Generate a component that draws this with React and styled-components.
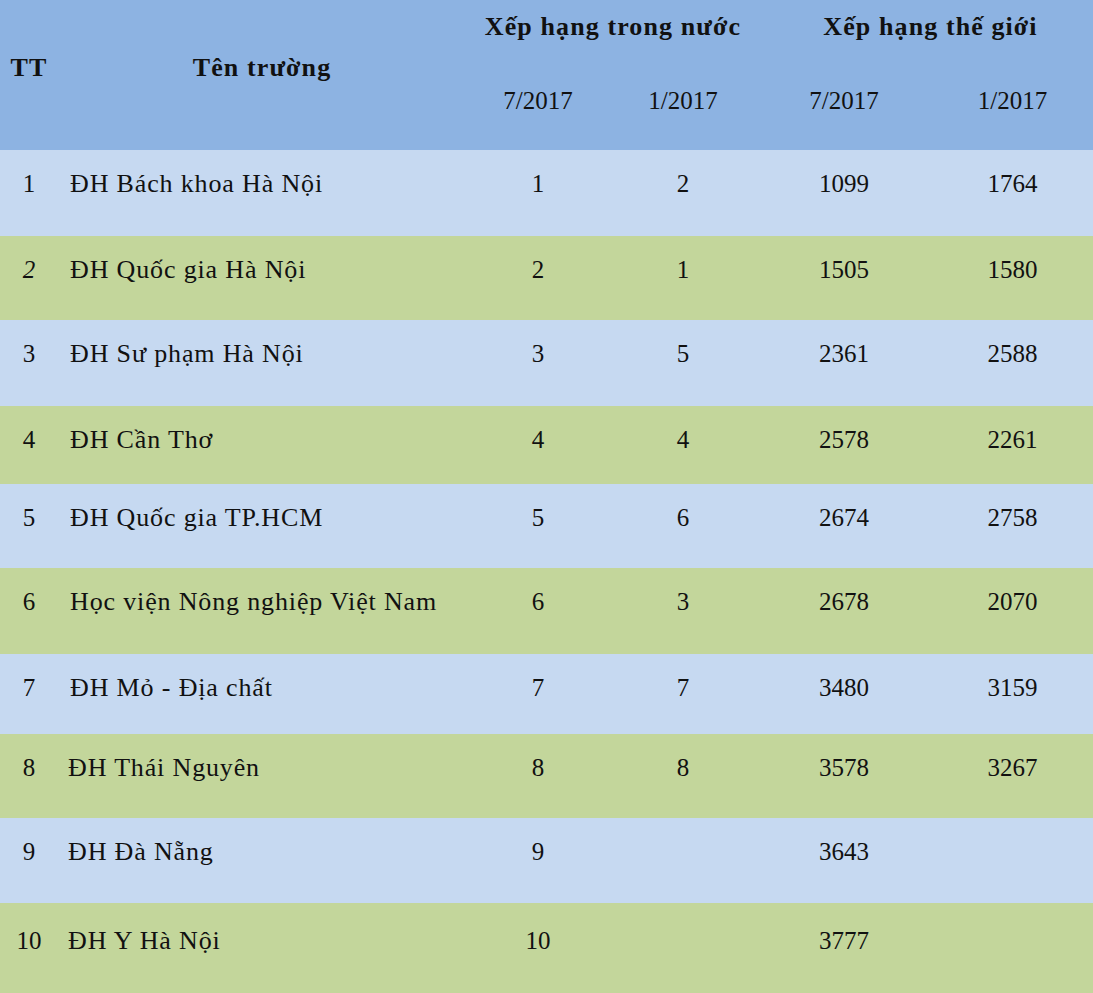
import React from "react";
import styled, { createGlobalStyle } from "styled-components";

const GlobalStyle = createGlobalStyle`
  html, body {
    margin: 0;
    padding: 0;
    background: #c3d69b;
  }
`;

const COLS = "58px 408px 144px 146px 176px 161px";

const rows = [
  { tt: "1", name: "ĐH Bách khoa Hà Nội", a: "1", b: "2", c: "1099", d: "1764", h: 86 },
  { tt: "2", name: "ĐH Quốc gia Hà Nội", a: "2", b: "1", c: "1505", d: "1580", h: 84, italic: true },
  { tt: "3", name: "ĐH Sư phạm Hà Nội", a: "3", b: "5", c: "2361", d: "2588", h: 86 },
  { tt: "4", name: "ĐH Cần Thơ", a: "4", b: "4", c: "2578", d: "2261", h: 78 },
  { tt: "5", name: "ĐH Quốc gia TP.HCM", a: "5", b: "6", c: "2674", d: "2758", h: 84 },
  { tt: "6", name: "Học viện Nông nghiệp Việt Nam", a: "6", b: "3", c: "2678", d: "2070", h: 86 },
  { tt: "7", name: "ĐH Mỏ - Địa chất", a: "7", b: "7", c: "3480", d: "3159", h: 80 },
  { tt: "8", name: "ĐH Thái Nguyên", a: "8", b: "8", c: "3578", d: "3267", h: 84, shift: -2 },
  { tt: "9", name: "ĐH Đà Nẵng", a: "9", b: "", c: "3643", d: "", h: 85, shift: -2 },
  { tt: "10", name: "ĐH Y Hà Nội", a: "10", b: "", c: "3777", d: "", h: 90, shift: -2, pt: 23 },
];

const Table = styled.div`
  width: 1093px;
  display: flex;
  flex-direction: column;
  font-family: "Liberation Serif", "Times New Roman", "DejaVu Serif", serif;
  color: #111;
`;

const Header = styled.div`
  display: grid;
  grid-template-columns: ${COLS};
  grid-template-rows: 54px 96px;
  background: #8db3e2;
`;

const HeadCell = styled.div`
  display: flex;
  align-items: center;
  justify-content: center;
  grid-column: ${(p) => p.$col};
  grid-row: ${(p) => p.$row};
  padding-bottom: ${(p) => p.$pb || 0}px;
  padding-left: ${(p) => p.$pl || 0}px;
  font-size: 26px;
  font-weight: bold;
  letter-spacing: 1.1px;
  white-space: nowrap;
`;

const SubHead = styled(HeadCell)`
  font-size: 25px;
  font-weight: normal;
  letter-spacing: 0;
`;

const Row = styled.div`
  display: grid;
  grid-template-columns: ${COLS};
  height: ${(p) => p.$h}px;
  box-sizing: border-box;
  padding-top: ${(p) => p.$pt || 19}px;
  background: ${(p) => (p.$alt ? "#c3d69b" : "#c6d9f1")};
  font-size: 25px;
  line-height: 30px;
`;

const Cell = styled.div`
  text-align: center;
  font-style: ${(p) => (p.$italic ? "italic" : "normal")};
  white-space: nowrap;
`;

const NameCell = styled.div`
  padding-left: ${(p) => 12 + (p.$shift || 0)}px;
  font-size: 26px;
  letter-spacing: 0.85px;
  white-space: nowrap;
`;

export default function App() {
  return (
    <>
      <GlobalStyle />
      <Table>
        <Header>
          <HeadCell $col="1" $row="1 / 3" $pb={14}>TT</HeadCell>
          <HeadCell $col="2" $row="1 / 3" $pb={14}>Tên trường</HeadCell>
          <HeadCell $col="3 / 5" $row="1" $pl={4}>Xếp hạng trong nước</HeadCell>
          <HeadCell $col="5 / 7" $row="1" $pl={12}>Xếp hạng thế giới</HeadCell>
          <SubHead $col="3" $row="2" $pb={2}>7/2017</SubHead>
          <SubHead $col="4" $row="2" $pb={2}>1/2017</SubHead>
          <SubHead $col="5" $row="2" $pb={2}>7/2017</SubHead>
          <SubHead $col="6" $row="2" $pb={2}>1/2017</SubHead>
        </Header>
        {rows.map((r, i) => (
          <Row key={r.tt} $h={r.h} $pt={r.pt} $alt={i % 2 === 1}>
            <Cell $italic={r.italic}>{r.tt}</Cell>
            <NameCell $shift={r.shift}>{r.name}</NameCell>
            <Cell>{r.a}</Cell>
            <Cell>{r.b}</Cell>
            <Cell>{r.c}</Cell>
            <Cell>{r.d}</Cell>
          </Row>
        ))}
      </Table>
    </>
  );
}
